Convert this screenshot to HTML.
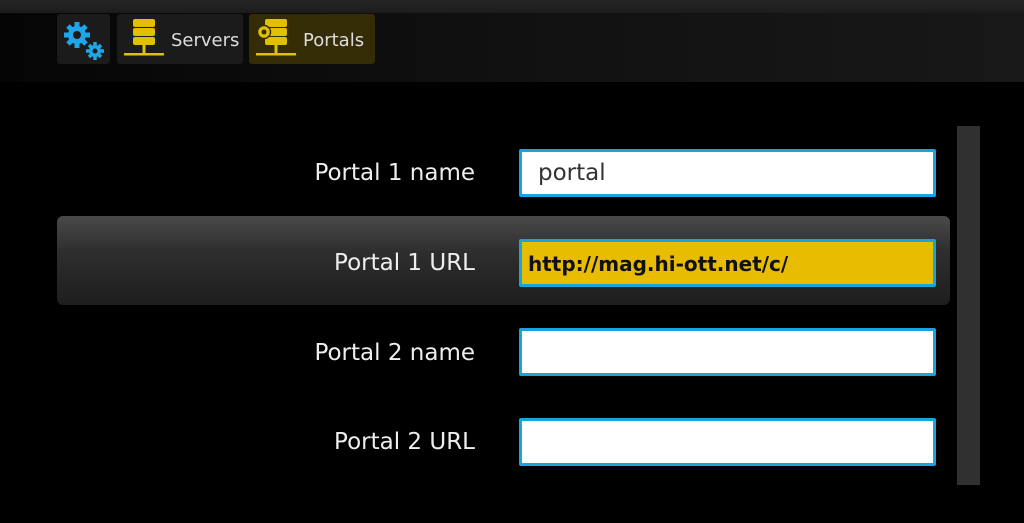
<!DOCTYPE html>
<html><head><style>
body{margin:0;width:1024px;height:523px;background:#000;overflow:hidden;position:relative;font-family:"DejaVu Sans","Liberation Sans",sans-serif}
.top{position:absolute;left:0;top:0;width:1024px;height:82px;background:linear-gradient(90deg,#050505,#111 50%,#181818)}
.strip{position:absolute;left:0;top:0;width:1024px;height:13px;background:linear-gradient(180deg,#262626,#1c1c1c)}
.tab{position:absolute;top:14px;height:50px;border-radius:3px;background:#1b1b1b;color:#ddd;font-size:18px;line-height:54px}
.tab span{position:absolute;left:54px}
.lbl{position:absolute;right:549px;color:#eee;font-size:23px;text-align:right}
.inp{position:absolute;left:519px;width:411px;height:42px;background:#fff;border:3px solid #1aa3dc;border-radius:2px}
.row{position:absolute;left:57px;top:216px;width:893px;height:89px;border-radius:6px;background:linear-gradient(180deg,#4a4a4a,#2e2e2e 40%,#1e1e1e)}
.sb{position:absolute;left:957px;top:126px;width:23px;height:359px;background:#303030}
</style></head><body>
<div class="top"></div><div class="strip"></div>
<div class="tab" style="left:57px;width:53px">
<svg width="53" height="50" viewBox="0 0 53 50"><g fill="#1ea6e8">
<circle cx="20" cy="21" r="9"/><g stroke="#1ea6e8" stroke-width="5"><path d="M20 8v26M7 21h26M11 12l18 18M29 12l-18 18"/></g>
<circle cx="38" cy="37" r="6"/><g stroke="#1ea6e8" stroke-width="3.5"><path d="M38 28v18M29 37h18M32 31l12 12M44 31l-12 12"/></g></g>
<circle cx="20" cy="21" r="4" fill="#1b1b1b"/><circle cx="38" cy="37" r="2.5" fill="#1b1b1b"/></svg></div>
<div class="tab" style="left:117px;width:126px">
<svg style="position:absolute;left:5px;top:3px" width="44" height="42" viewBox="0 0 44 42"><g fill="#e0c000">
<rect x="11" y="2" width="22" height="8" rx="2"/><rect x="11" y="11" width="22" height="8" rx="2"/><rect x="11" y="20" width="22" height="8" rx="2"/><rect x="20.5" y="28" width="3" height="9"/><rect x="2" y="36" width="40" height="2.5"/></g></svg>
<span>Servers</span></div>
<div class="tab" style="left:249px;width:126px;background:#342c05">
<svg style="position:absolute;left:5px;top:3px" width="44" height="42" viewBox="0 0 44 42"><g fill="#e0c000">
<rect x="11" y="2" width="22" height="8" rx="2"/><rect x="11" y="11" width="22" height="8" rx="2"/><rect x="11" y="20" width="22" height="8" rx="2"/><rect x="20.5" y="28" width="3" height="9"/><rect x="2" y="36" width="40" height="2.5"/><circle cx="10" cy="15" r="6.5" stroke="#342c05" stroke-width="1.5"/></g><circle cx="10" cy="15" r="2.5" fill="#342c05"/></svg>
<span>Portals</span></div>
<div class="sb"></div>
<div class="row"></div>
<div class="lbl" style="top:160px">Portal 1 name</div>
<div class="inp" style="top:149px"><span style="position:absolute;left:16px;top:8px;font-size:23px;color:#333">portal</span></div>
<div class="lbl" style="top:250px">Portal 1 URL</div>
<div class="inp" style="top:239px;background:#e8bc00"><span style="position:absolute;left:6px;top:10px;font-size:20px;font-weight:bold;color:#111">http://mag.hi-ott.net/c/</span></div>
<div class="lbl" style="top:340px">Portal 2 name</div>
<div class="inp" style="top:328px"></div>
<div class="lbl" style="top:429px">Portal 2 URL</div>
<div class="inp" style="top:418px"></div>
</body></html>
